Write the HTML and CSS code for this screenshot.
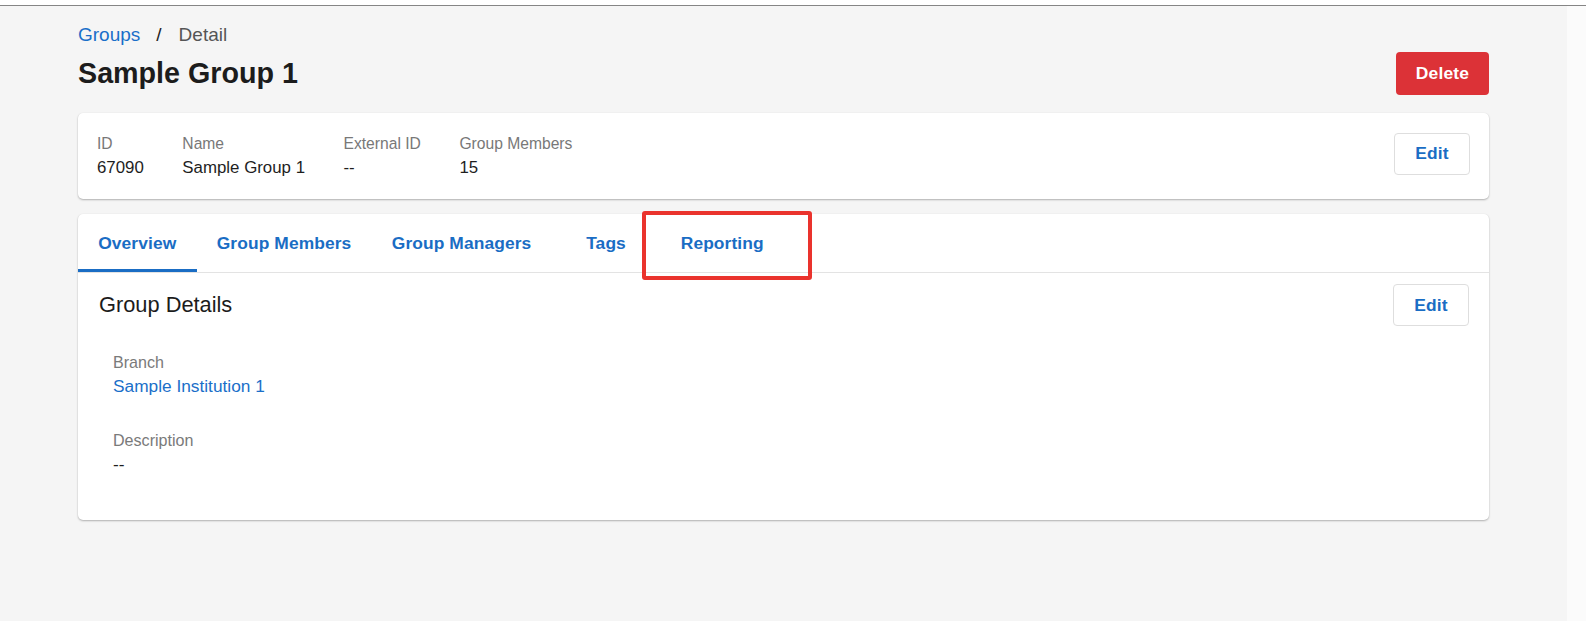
FILE: index.html
```html
<!DOCTYPE html>
<html lang="en">
<head>
<meta charset="utf-8">
<title>Sample Group 1</title>
<link rel="stylesheet" href="styles.css">
</head>
<body>
<div class="topbar"></div>
<div class="layout">
  <main class="main">
    <nav class="breadcrumb">
      <a class="crumb-link" href="#">Groups</a>
      <span class="crumb-sep">/</span>
      <span class="crumb-current">Detail</span>
    </nav>
    <div class="page-header">
      <h1 class="page-title">Sample Group 1</h1>
      <button class="btn btn-danger">Delete</button>
    </div>

    <section class="card summary">
      <div class="summary-fields">
        <div class="sfield"><div class="slabel">ID</div><div class="svalue">67090</div></div>
        <div class="sfield"><div class="slabel">Name</div><div class="svalue">Sample Group 1</div></div>
        <div class="sfield"><div class="slabel">External ID</div><div class="svalue">--</div></div>
        <div class="sfield"><div class="slabel">Group Members</div><div class="svalue">15</div></div>
      </div>
      <button class="btn btn-outline summary-edit">Edit</button>
    </section>

    <section class="card detail">
      <div class="tabs">
        <a class="tab active" href="#">Overview</a>
        <a class="tab" href="#">Group Members</a>
        <a class="tab" href="#">Group Managers</a>
        <a class="tab" href="#">Tags</a>
        <a class="tab" href="#">Reporting</a>
      </div>
      <div class="annotation"></div>
      <div class="section-head">
        <h2 class="section-title">Group Details</h2>
        <button class="btn btn-outline">Edit</button>
      </div>
      <div class="fields">
        <div class="field">
          <div class="flabel">Branch</div>
          <a class="fvalue link" href="#">Sample Institution 1</a>
        </div>
        <div class="field">
          <div class="flabel">Description</div>
          <div class="fvalue">--</div>
        </div>
      </div>
    </section>
  </main>
  <aside class="side"></aside>
</div>
</body>
</html>
```

FILE: styles.css
```css
html, body {
  margin: 0;
  padding: 0;
  overflow: hidden;
}
body {
  font-family: "Liberation Sans", Arial, sans-serif;
  color: #222;
  background: #f5f5f5;
}
.topbar {
  height: 5px;
  background: #fff;
  border-bottom: 1px solid #858585;
}
.layout {
  display: flex;
  height: 615px;
}
.main {
  width: 1567px;
  flex: none;
  box-sizing: border-box;
  padding: 0 78px 0 78px;
  background: #f5f5f5;
}
.side {
  flex: 1;
  background: #fbfbfb;
}
.breadcrumb {
  margin-top: 17px;
  height: 23px;
  line-height: 23px;
  font-size: 19px;
  display: flex;
  align-items: center;
}
.crumb-link {
  color: #1a6fc9;
  text-decoration: none;
}
.crumb-sep {
  color: #222;
  margin: 0 17px 0 16px;
}
.crumb-current {
  color: #555;
}
.page-header {
  display: flex;
  align-items: center;
  justify-content: space-between;
  margin-top: 6px;
  height: 42px;
}
.page-title {
  margin: 0;
  font-size: 28.7px;
  font-weight: 700;
  color: #1c1c1c;
}
.btn {
  font-family: "Liberation Sans", Arial, sans-serif;
  font-size: 17.4px;
  font-weight: 700;
  letter-spacing: 0.2px;
  border-radius: 4px;
  cursor: pointer;
}
.btn-danger {
  width: 93px;
  height: 43px;
  border: none;
  background: #dc3237;
  color: #fff;
}
.btn-outline {
  width: 76px;
  height: 42px;
  background: #fff;
  border: 1px solid #dedede;
  color: #1a6dc4;
}
.card {
  background: #fff;
  border-radius: 5px;
  box-shadow: 0 1px 2px rgba(0,0,0,0.28), 0 0 1px rgba(0,0,0,0.08);
}
.summary {
  margin-top: 19px;
  height: 86px;
  box-sizing: border-box;
  padding: 0 19px 0 19px;
  display: flex;
  align-items: center;
  justify-content: space-between;
}
.summary-edit {
  margin-bottom: 5px;
}
.summary-fields {
  display: flex;
  gap: 38.5px;
}
.slabel {
  font-size: 15.65px;
  line-height: 24px;
  color: #787878;
}
.svalue {
  font-size: 16.85px;
  line-height: 24px;
  color: #1e1e1e;
}
.detail {
  position: relative;
  margin-top: 15px;
  padding-bottom: 44px;
}
.tabs {
  display: flex;
  border-bottom: 1px solid #e3e3e3;
}
.tab {
  box-sizing: border-box;
  min-width: 109px;
  height: 58px;
  padding: 3px 20.2px 0;
  display: flex;
  align-items: center;
  justify-content: center;
  font-size: 17.4px;
  font-weight: 700;
  letter-spacing: 0.1px;
  color: #1a6dc4;
  text-decoration: none;
  border-bottom: 3px solid transparent;
}
.tab.active {
  border-bottom-color: #1a6dc4;
}
.annotation {
  position: absolute;
  left: 564px;
  top: -3px;
  width: 170px;
  height: 69px;
  box-sizing: border-box;
  border: 4px solid #ea332d;
  border-radius: 3px;
}
.section-head {
  display: flex;
  align-items: center;
  justify-content: space-between;
  padding: 11px 20px 0 21px;
}
.section-title {
  margin: 0;
  font-size: 21.8px;
  font-weight: 400;
  color: #1c1c1c;
}
.fields {
  padding-left: 35px;
  margin-top: 24px;
  display: flex;
  flex-direction: column;
  gap: 30px;
}
.flabel {
  font-size: 16.1px;
  line-height: 24px;
  color: #7a7a7a;
}
.fvalue {
  display: block;
  font-size: 17.3px;
  line-height: 24px;
  color: #1e1e1e;
}
.fvalue.link {
  color: #1a6fc9;
  text-decoration: none;
}
```
